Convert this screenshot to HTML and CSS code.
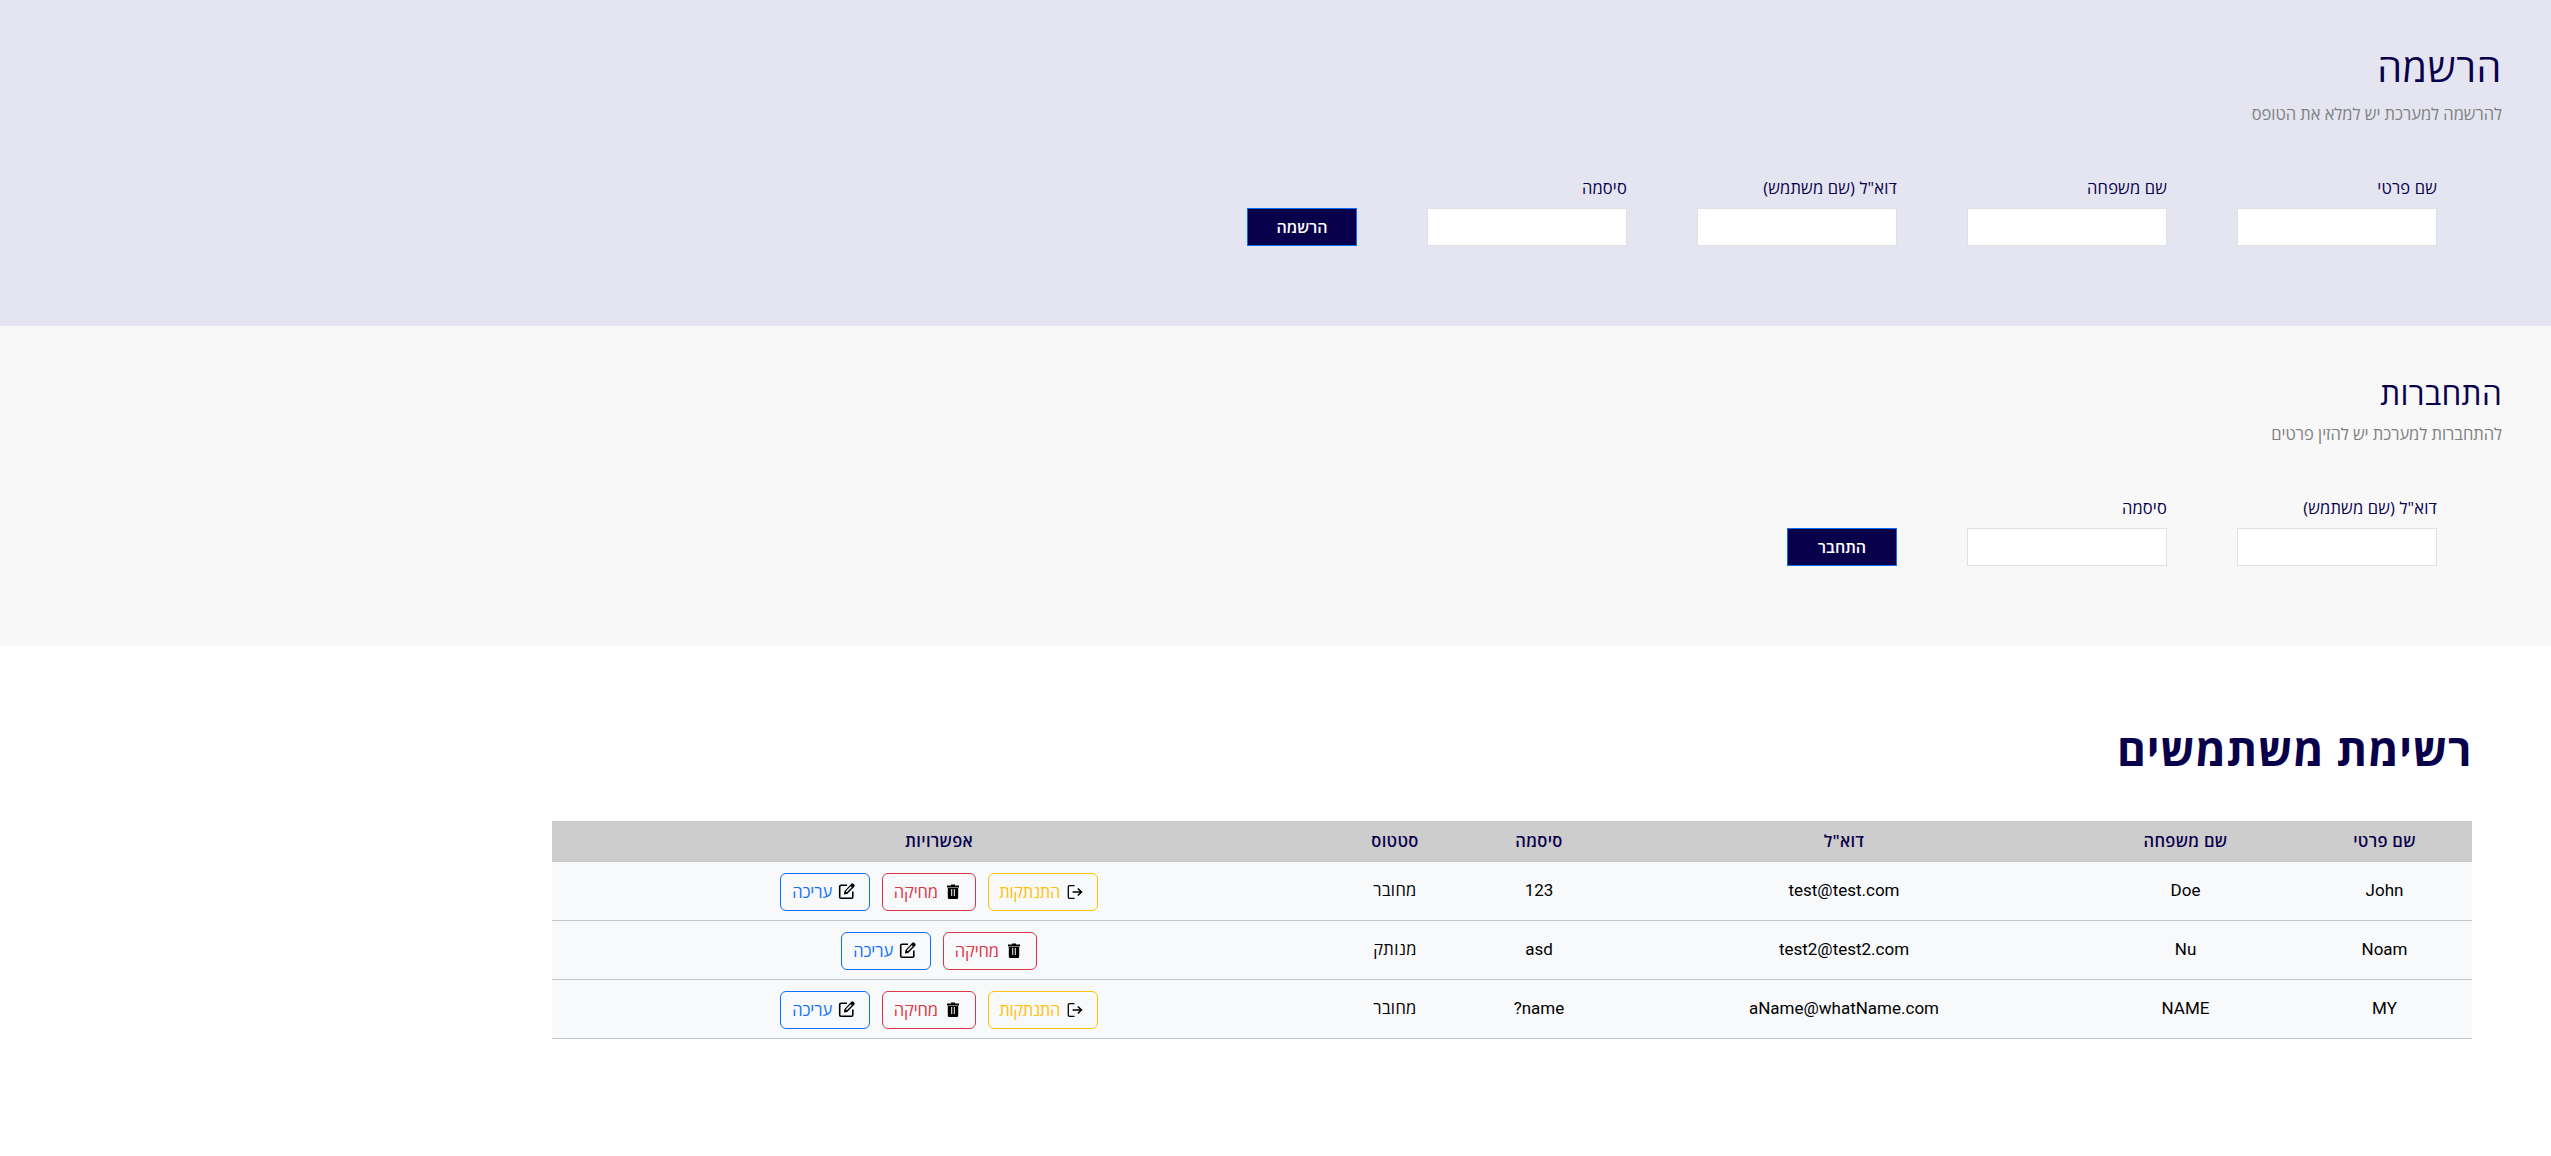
FILE: index.html
```html
<!DOCTYPE html>
<html lang="he" dir="rtl">
<head>
<meta charset="utf-8">
<title>ניהול משתמשים</title>
<link rel="stylesheet" href="styles.css">
</head>
<body>
<svg class="sprite" width="0" height="0">
  <symbol id="logout" viewBox="0 0 20 20"><path d="M9.500 3.700H4.700Q3.300 3.700 3.300 4.700V15.300Q3.300 16.300 4.700 16.300H9.500" fill="none" stroke="#000" stroke-width="1.300"/><path d="M7.600 10H16.300M12.800 6.500L16.500 10L12.800 13.500" fill="none" stroke="#000" stroke-width="1.500"/></symbol>
  <symbol id="trash" viewBox="0 0 20 20"><path fill="#000" fill-rule="evenodd" d="M8 2.500h4v1h4v2H4V3.500h4zM4.800 6h10.400v9.500Q15.200 17 13.700 17h-7.400Q4.800 17 4.800 15.500zM8.200 7v7h1V7zM10.800 7v7h1V7z"/></symbol>
  <symbol id="edit" viewBox="0 0 20 20"><path d="M10 3.200H4Q2.700 3.200 2.700 4.500V15Q2.700 16.300 4 16.300H14.500Q15.800 16.300 15.800 15V9.500" fill="none" stroke="#000" stroke-width="1.600"/><path fill="#000" fill-rule="evenodd" d="M14.300 1.700Q15.300.900 16.300 1.700L17.400 2.800Q18.100 3.700 17.300 4.700L10.200 11.900L6.900 12.500L7.400 9.200zM13.700 4.200L8.800 9.300L9.800 10.200L14.800 5.200z"/></symbol>
</svg>

<section class="panel register">
  <h1 class="register-title">הרשמה</h1>
  <p class="hint">להרשמה למערכת יש למלא את הטופס</p>
  <form class="form">
    <label class="field">שם פרטי<input class="input" type="text"></label>
    <label class="field">שם משפחה<input class="input" type="text"></label>
    <label class="field">דוא"ל (שם משתמש)<input class="input" type="text"></label>
    <label class="field">סיסמה<input class="input" type="password"></label>
    <button class="submit" type="button">הרשמה</button>
  </form>
</section>

<section class="panel login">
  <h2 class="login-title">התחברות</h2>
  <p class="hint">להתחברות למערכת יש להזין פרטים</p>
  <form class="form">
    <label class="field">דוא"ל (שם משתמש)<input class="input" type="text"></label>
    <label class="field">סיסמה<input class="input" type="password"></label>
    <button class="submit" type="button">התחבר</button>
  </form>
</section>

<section class="users">
  <h1 class="users-title">רשימת משתמשים</h1>
  <table class="table">
    <colgroup><col class="c-first"><col class="c-last"><col class="c-mail"><col class="c-pass"><col class="c-status"><col></colgroup>
    <thead>
      <tr><th>שם פרטי</th><th>שם משפחה</th><th>דוא"ל</th><th>סיסמה</th><th>סטטוס</th><th>אפשרויות</th></tr>
    </thead>
    <tbody>
      <tr>
        <td>John</td><td>Doe</td><td>test@test.com</td><td>123</td><td class="he">מחובר</td>
        <td class="options"><div class="actions">
          <button class="btn warning"><svg class="icon"><use href="#logout"/></svg>התנתקות</button>
          <button class="btn danger"><svg class="icon"><use href="#trash"/></svg>מחיקה</button>
          <button class="btn primary"><svg class="icon"><use href="#edit"/></svg>עריכה</button>
        </div></td>
      </tr>
      <tr>
        <td>Noam</td><td>Nu</td><td>test2@test2.com</td><td>asd</td><td class="he">מנותק</td>
        <td class="options"><div class="actions">
          <button class="btn danger"><svg class="icon"><use href="#trash"/></svg>מחיקה</button>
          <button class="btn primary"><svg class="icon"><use href="#edit"/></svg>עריכה</button>
        </div></td>
      </tr>
      <tr>
        <td>MY</td><td>NAME</td><td>aName@whatName.com</td><td>name?</td><td class="he">מחובר</td>
        <td class="options"><div class="actions">
          <button class="btn warning"><svg class="icon"><use href="#logout"/></svg>התנתקות</button>
          <button class="btn danger"><svg class="icon"><use href="#trash"/></svg>מחיקה</button>
          <button class="btn primary"><svg class="icon"><use href="#edit"/></svg>עריכה</button>
        </div></td>
      </tr>
    </tbody>
  </table>
</section>
</body>
</html>
```
FILE: styles.css
```css
* { box-sizing: border-box; }
body {
  margin: 0;
  background: #fff;
  color: #08004a;
  font: 400 16.5px/24px "Open Sans", sans-serif;
}
h1, h2, p { margin: 0; }
.sprite { position: absolute; }

.panel { padding: 0 49px; }
.register { height: 326px; padding-top: 43px; background: #e5e5f1; }
.login { height: 320px; padding-top: 48px; background: #f8f8f8; }
.register-title { font-size: 39.5px; line-height: 49px; font-weight: 500; letter-spacing: .6px; }
.login-title { font-size: 31.5px; line-height: 38px; font-weight: 500; letter-spacing: .3px; }
.hint { margin-top: 10px; color: #808080; letter-spacing: -.03px; }

.form { display: flex; align-items: flex-end; gap: 70px; margin-top: 50px; padding-right: 65px; }
.field { display: flex; flex-direction: column; gap: 8px; width: 200px; letter-spacing: .15px; }
.input { width: 200px; height: 38px; padding: 6px 12px; border: 1px solid #dee2e6; background: #fff; font: inherit; }
.submit {
  width: 110px;
  height: 38px;
  padding: 0;
  border: 1px solid #0d6efd;
  background: #08004a;
  color: #fff;
  font: 600 16px/24px "Open Sans", sans-serif;
}

.users { padding: 73px 79px 0 0; }
.users-title { font-size: 44px; line-height: 60px; font-weight: 700; letter-spacing: .75px; }
.table { width: 1920px; margin-top: 42px; table-layout: fixed; border-collapse: separate; border-spacing: 0; text-align: center; }
.c-first { width: 175px; }
.c-last { width: 223px; }
.c-mail { width: 460px; }
.c-pass { width: 150px; }
.c-status { width: 138px; }
th { height: 41px; padding: 8px 0; border-bottom: 1px solid #c6c7c8; background: #cdcdcd; font-weight: 600; letter-spacing: .3px; }
td { height: 59px; padding: 16px 0 18px; border-bottom: 1px solid #c6c7c8; background: #f8f9fb; color: #000; font: 400 17px/24px Roboto, "Open Sans", sans-serif; }
.he { font: 400 16.5px/24px "Open Sans", sans-serif; letter-spacing: .35px; }
.options { padding: 11px 0 9px; }
.actions { display: flex; justify-content: center; gap: 12px; }
.btn {
  display: flex;
  align-items: center;
  gap: 5px;
  height: 38px;
  padding: 0 12px 1px;
  border: 1px solid;
  border-radius: 6px;
  background: transparent;
  font: 400 16.5px/24px "Open Sans", sans-serif;
  letter-spacing: -.1px;
  white-space: nowrap;
}
.icon { flex: none; width: 20px; height: 20px; }
.warning { width: 110px; color: #ffc107; letter-spacing: -.3px; }
.danger { width: 94px; color: #dc3545; }
.primary { width: 90px; color: #0d6efd; }
```
